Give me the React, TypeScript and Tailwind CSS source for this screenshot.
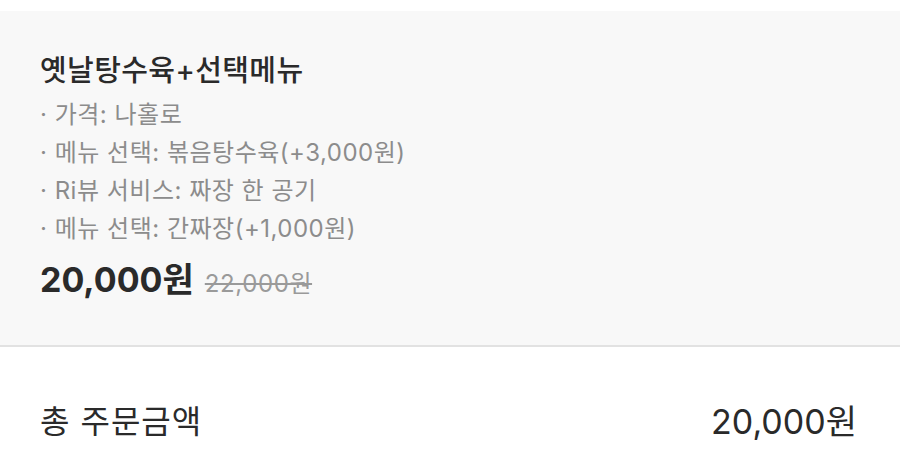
export default function App() {
  const options = [
    "· 가격: 나홀로",
    "· 메뉴 선택: 볶음탕수육(+3,000원)",
    "· Ri뷰 서비스: 짜장 한 공기",
    "· 메뉴 선택: 간짜장(+1,000원)",
  ];
  return (
    <div
      className="w-[900px] h-[468px] bg-white overflow-hidden pt-[11px]"
      style={{ fontFamily: 'Inter, "Noto Sans CJK KR", "Noto Sans", sans-serif' }}
    >
      <section className="bg-[#f8f8f8] border-b-2 border-[#e2e2e2] px-[40px] pt-[41px] pb-[40px]">
        <h2 className="text-[29px] leading-[38px] font-medium text-[#2a2a2a] tracking-[0.4px]">
          옛날탕수육+선택메뉴
        </h2>
        <ul className="mt-[6px]">
          {options.map((o, i) => (
            <li key={i} className="text-[24px] leading-[38px] text-[#8c8c8c] tracking-[0.5px]">
              {o}
            </li>
          ))}
        </ul>
        <div className="mt-[11px] flex items-baseline gap-[11px] leading-[42px]">
          <span className="text-[34px] font-bold text-[#2a2a2a]">20,000원</span>
          <span className="text-[24px] text-[#9a9a9a] line-through tracking-[0.6px]">22,000원</span>
        </div>
      </section>
      <div className="mt-[55px] flex items-center justify-between pl-[40px] pr-[43px] leading-[40px] text-[#2a2a2a]">
        <span className="text-[32px] tracking-[1px]">총 주문금액</span>
        <span className="text-[34px]">20,000원</span>
      </div>
    </div>
  );
}
